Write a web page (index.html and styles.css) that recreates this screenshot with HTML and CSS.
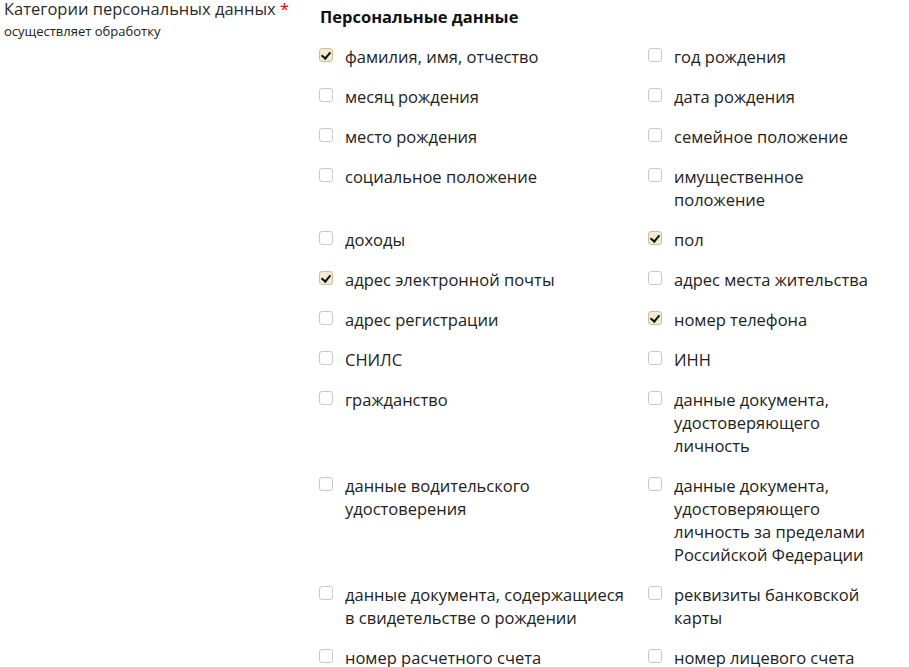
FILE: index.html
```html
<!DOCTYPE html>
<html lang="ru">
<head>
<meta charset="utf-8">
<link rel="stylesheet" href="styles.css">
</head>
<body>
<div class="form-row">
  <div class="form-label">
    <div class="label-title">Категории персональных данных <span class="req">*</span></div>
    <div class="label-hint">осуществляет обработку</div>
  </div>
  <div class="form-field">
    <div class="group-title">Персональные данные</div>
    <div class="options">
      <label class="option"><span class="box checked"></span><span class="text">фамилия, имя, отчество</span></label>
      <label class="option"><span class="box"></span><span class="text">год рождения</span></label>
      <label class="option"><span class="box"></span><span class="text">месяц рождения</span></label>
      <label class="option"><span class="box"></span><span class="text">дата рождения</span></label>
      <label class="option"><span class="box"></span><span class="text">место рождения</span></label>
      <label class="option"><span class="box"></span><span class="text">семейное положение</span></label>
      <label class="option"><span class="box"></span><span class="text">социальное положение</span></label>
      <label class="option"><span class="box"></span><span class="text">имущественное положение</span></label>
      <label class="option"><span class="box"></span><span class="text">доходы</span></label>
      <label class="option"><span class="box checked"></span><span class="text">пол</span></label>
      <label class="option"><span class="box checked"></span><span class="text">адрес электронной почты</span></label>
      <label class="option"><span class="box"></span><span class="text">адрес места жительства</span></label>
      <label class="option"><span class="box"></span><span class="text">адрес регистрации</span></label>
      <label class="option"><span class="box checked"></span><span class="text">номер телефона</span></label>
      <label class="option"><span class="box"></span><span class="text">СНИЛС</span></label>
      <label class="option"><span class="box"></span><span class="text">ИНН</span></label>
      <label class="option"><span class="box"></span><span class="text">гражданство</span></label>
      <label class="option"><span class="box"></span><span class="text">данные документа, удостоверяющего личность</span></label>
      <label class="option"><span class="box"></span><span class="text">данные водительского удостоверения</span></label>
      <label class="option"><span class="box"></span><span class="text">данные документа, удостоверяющего личность за пределами Российской Федерации</span></label>
      <label class="option"><span class="box"></span><span class="text">данные документа, содержащиеся в свидетельстве о рождении</span></label>
      <label class="option"><span class="box"></span><span class="text">реквизиты банковской карты</span></label>
      <label class="option"><span class="box"></span><span class="text">номер расчетного счета</span></label>
      <label class="option"><span class="box"></span><span class="text">номер лицевого счета</span></label>
    </div>
  </div>
</div>
</body>
</html>
```
FILE: styles.css
```css
html, body {
  margin: 0;
  padding: 0;
  background: #fff;
}
body {
  font-family: "Open Sans", "Noto Sans", sans-serif;
  color: #222;
  overflow: hidden;
}
.form-row {
  display: grid;
  grid-template-columns: 319px 1fr;
}
.form-label {
  padding-left: 4px;
}
.label-title {
  font-size: 16.5px;
  line-height: 17px;
  color: #2b2b2b;
}
.req {
  color: #e00;
}
.label-hint {
  font-size: 13px;
  line-height: 16px;
  margin-top: 6px;
  color: #222;
}
.form-field {
  padding-top: 5px;
}
.group-title {
  font-size: 16.5px;
  font-weight: 700;
  line-height: 23px;
  color: #111;
  padding-left: 1px;
  margin-bottom: 17px;
}
.options {
  display: grid;
  grid-template-columns: 314px 236px;
  column-gap: 15px;
  row-gap: 17px;
}
.option {
  display: flex;
  align-items: flex-start;
  gap: 12px;
  font-size: 16.5px;
  line-height: 23px;
}
.box {
  flex: none;
  width: 12px;
  height: 12px;
  margin-top: 3px;
  border: 1px solid #c8c8c8;
  border-radius: 3px;
  background: #fff;
  position: relative;
}
.box.checked {
  background: #f3ead2;
  border-color: #cdbf9c;
}
.box.checked::after {
  content: "";
  position: absolute;
  left: 3px;
  top: 1px;
  width: 4px;
  height: 7px;
  border: solid #111;
  border-width: 0 2px 2px 0;
  transform: rotate(40deg);
}
.text {
  color: #222;
}
```
